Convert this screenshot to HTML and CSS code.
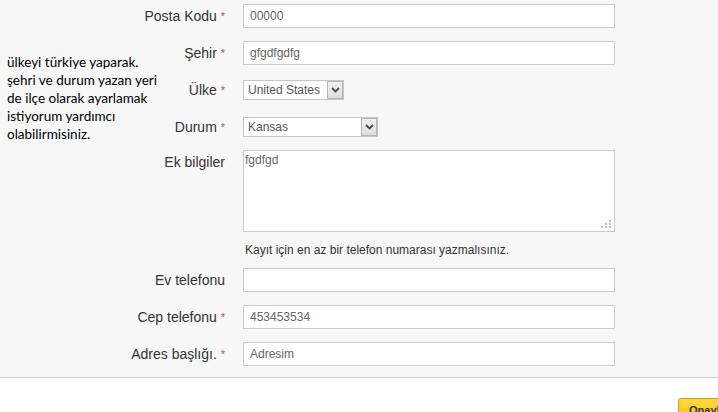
FILE: index.html
```html
<!DOCTYPE html>
<html lang="tr">
<head>
    <meta charset="UTF-8">
    <title>Adres Bilgileri</title>
    <link rel="stylesheet" href="styles.css">
</head>
<body>
    <div class="note">
        ülkeyi türkiye yaparak.<br>
        şehri ve durum yazan yeri<br>
        de ilçe olarak ayarlamak<br>
        istiyorum yardımcı<br>
        olabilirmisiniz.
    </div>

    <form class="address-form">
        <div class="form-area">
            <div class="row">
                <label class="field-label">Posta Kodu <span class="req">*</span></label>
                <input class="text-input" type="text" value="00000">
            </div>
            <div class="row">
                <label class="field-label">Şehir <span class="req">*</span></label>
                <input class="text-input" type="text" value="gfgdfgdfg">
            </div>
            <div class="row">
                <label class="field-label">Ülke <span class="req">*</span></label>
                <div class="select-wrap country">
                    <select class="select-box">
                        <option>United States</option>
                    </select>
                    <span class="select-arrow">
                        <svg width="9" height="6" viewBox="0 0 9 6"><path d="M1 1 L4.5 4.5 L8 1" fill="none" stroke="#4a4a4a" stroke-width="1.8"/></svg>
                    </span>
                </div>
            </div>
            <div class="row">
                <label class="field-label">Durum <span class="req">*</span></label>
                <div class="select-wrap state">
                    <select class="select-box">
                        <option>Kansas</option>
                    </select>
                    <span class="select-arrow">
                        <svg width="9" height="6" viewBox="0 0 9 6"><path d="M1 1 L4.5 4.5 L8 1" fill="none" stroke="#4a4a4a" stroke-width="1.8"/></svg>
                    </span>
                </div>
            </div>
            <div class="row row-top">
                <label class="field-label">Ek bilgiler</label>
                <div class="textarea-wrap">
                    <textarea class="text-area">fgdfgd</textarea>
                    <svg class="grip" width="11" height="9" viewBox="0 0 11 9">
                        <rect x="8" y="0" width="2" height="2" fill="#bdbdbd"/>
                        <rect x="4" y="3" width="2" height="2" fill="#bdbdbd"/>
                        <rect x="8" y="3" width="2" height="2" fill="#bdbdbd"/>
                        <rect x="0" y="6" width="2" height="2" fill="#bdbdbd"/>
                        <rect x="4" y="6" width="2" height="2" fill="#bdbdbd"/>
                        <rect x="8" y="6" width="2" height="2" fill="#bdbdbd"/>
                    </svg>
                </div>
            </div>
            <p class="hint">Kayıt için en az bir telefon numarası yazmalısınız.</p>
            <div class="row">
                <label class="field-label">Ev telefonu</label>
                <input class="text-input" type="text" value="">
            </div>
            <div class="row">
                <label class="field-label">Cep telefonu <span class="req">*</span></label>
                <input class="text-input" type="text" value="453453534">
            </div>
            <div class="row">
                <label class="field-label">Adres başlığı. <span class="req">*</span></label>
                <input class="text-input" type="text" value="Adresim">
            </div>
        </div>

        <div class="form-actions">
            <button class="submit-btn" type="button">Onayla</button>
        </div>
    </form>
</body>
</html>
```

FILE: styles.css
```css
* {
    margin: 0;
    padding: 0;
    box-sizing: border-box;
}

html, body {
    height: 412px;
    overflow: hidden;
}

body {
    font-family: 'Liberation Sans', Arial, sans-serif;
    background: #fff;
    color: #333;
    position: relative;
}

.note {
    position: absolute;
    top: 53px;
    left: 7px;
    font-family: Lato, 'Open Sans', sans-serif;
    font-size: 13.5px;
    line-height: 18px;
    color: #000;
}

.form-area {
    background: #f7f7f7;
    border-bottom: 1px solid #cfcfcf;
    padding: 4px 0 11px;
}

.row {
    display: flex;
    align-items: center;
    min-height: 24px;
    margin-bottom: 13px;
}

.row:last-child {
    margin-bottom: 0;
}

.row-top {
    align-items: flex-start;
    margin-top: -2px;
}

.field-label {
    flex: none;
    width: 225px;
    margin-right: 18px;
    text-align: right;
    font-size: 14px;
    color: #333;
}

.row-top .field-label {
    padding-top: 4px;
}

.req {
    color: #b0524f;
    font-size: 11px;
    position: relative;
    top: -1px;
}

.text-input {
    width: 372px;
    height: 24px;
    border: 1px solid #cacaca;
    background: #fff;
    padding: 0 6px;
    font-family: 'Liberation Sans', Arial, sans-serif;
    font-size: 12px;
    color: #666;
    outline: none;
}

.select-wrap {
    position: relative;
    height: 20px;
}

.select-wrap.country {
    width: 101px;
}

.select-wrap.state {
    width: 135px;
}

.select-box {
    appearance: none;
    -webkit-appearance: none;
    width: 100%;
    height: 20px;
    border: 1px solid #c6c6c6;
    border-radius: 0;
    background: #fff;
    padding: 0 0 0 4px;
    font-family: 'Liberation Sans', Arial, sans-serif;
    font-size: 12px;
    color: #555;
    outline: none;
}

.select-arrow {
    position: absolute;
    top: 1px;
    right: 1px;
    width: 16px;
    height: 18px;
    border: 1px solid #b4b4b4;
    background: linear-gradient(#f2f2f2, #dcdcdc);
    display: flex;
    align-items: center;
    justify-content: center;
}

.textarea-wrap {
    position: relative;
    width: 372px;
    height: 82px;
}

.text-area {
    display: block;
    width: 100%;
    height: 100%;
    border: 1px solid #cacaca;
    background: #fff;
    padding: 2px 1px;
    font-family: 'Liberation Sans', Arial, sans-serif;
    font-size: 12px;
    color: #666;
    resize: none;
    outline: none;
}

.grip {
    position: absolute;
    right: 3px;
    bottom: 3px;
}

.hint {
    margin: -3px 0 10px 245px;
    font-size: 12px;
    line-height: 16px;
    color: #333;
}

.form-actions {
    display: flex;
    justify-content: flex-start;
    padding: 20px 0 0 678px;
}

.submit-btn {
    flex: none;
    display: block;
    width: 70px;
    height: 24px;
    border: 1px solid #d4a300;
    border-radius: 3px;
    background: linear-gradient(#ffd84a, #f6c400);
    font-family: 'Liberation Sans', Arial, sans-serif;
    font-size: 11px;
    line-height: 13px;
    font-weight: bold;
    color: #333;
    padding: 0 0 0 10px;
    text-align: left;
    align-self: flex-start;
}
```
